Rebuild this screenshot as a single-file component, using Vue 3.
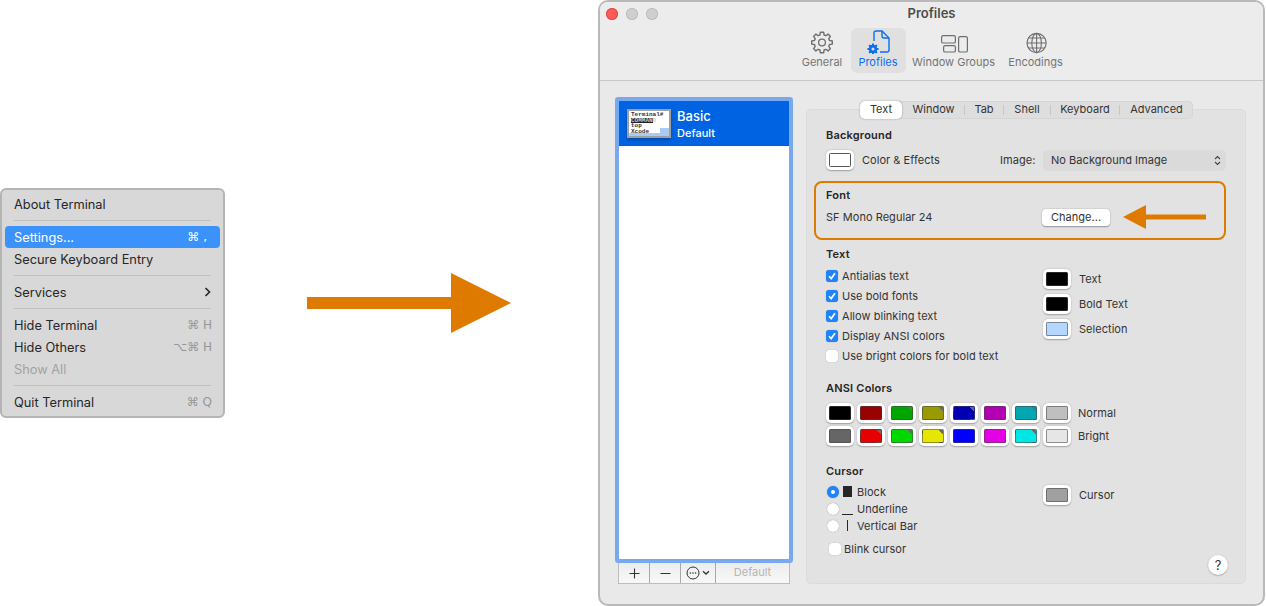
<template>
  <div class="page">
    <div class="menu">
      <template v-for="item in menuItems" :key="item.label">
        <div v-if="item.sep" class="menu-sep"></div>
        <div v-else class="menu-row" :class="{ active: item.active, muted: item.muted }">
          <span>{{ item.label }}</span>
          <span v-if="item.keys" class="keys">{{ item.keys }}</span>
          <svg v-if="item.sub" class="sub-arrow" width="7" height="10" viewBox="0 0 7 10">
            <path d="M1.5 1 L5.5 5 L1.5 9" fill="none" stroke="#2b2b2b" stroke-width="1.7" />
          </svg>
        </div>
      </template>
    </div>

    <svg class="big-arrow" width="204" height="60" viewBox="0 0 204 60">
      <path d="M0 24 H144 V0 L204 30 L144 60 V36 H0 Z" fill="#df7a00" />
    </svg>

    <div class="window">
      <div class="lights">
        <span class="light red"></span>
        <span class="light"></span>
        <span class="light"></span>
      </div>
      <div class="title">Profiles</div>
      <div class="toolbar">
        <div class="tool general">
          <svg width="24" height="24" viewBox="0 0 24 24">
            <path :d="gearOutline" fill="none" stroke="#6e6e6e" stroke-width="1.4" stroke-linejoin="round" />
            <circle cx="12" cy="12.5" r="3.4" fill="none" stroke="#6e6e6e" stroke-width="1.3" />
          </svg>
          <span>General</span>
        </div>
        <div class="tool profiles">
          <svg width="24" height="24" viewBox="0 0 24 24">
            <path d="M8 11 V3 a2 2 0 0 1 2-2 H16 L23 8 V20 a2 2 0 0 1-2 2 H14" fill="none" stroke="#0a6ef0" stroke-width="1.4" />
            <path d="M16 1 V6 a2 2 0 0 0 2 2 H23" fill="none" stroke="#0a6ef0" stroke-width="1.4" />
            <path :d="smallGear" fill="#0a6ef0" />
            <circle cx="7" cy="19" r="1.5" fill="#e0e0e0" />
          </svg>
          <span>Profiles</span>
        </div>
        <div class="tool groups">
          <svg width="30" height="24" viewBox="0 0 30 24">
            <rect x="2.6" y="5.6" width="13.8" height="7.4" rx="1.6" fill="none" stroke="#6e6e6e" stroke-width="1.2" />
            <rect x="4.6" y="15.6" width="11.8" height="6.4" rx="1.6" fill="none" stroke="#6e6e6e" stroke-width="1.2" />
            <rect x="19.6" y="6.6" width="8.8" height="15.4" rx="1.6" fill="none" stroke="#6e6e6e" stroke-width="1.2" />
          </svg>
          <span>Window Groups</span>
        </div>
        <div class="tool encodings">
          <svg width="24" height="24" viewBox="0 0 24 24">
            <g fill="none" stroke="#6e6e6e" stroke-width="1.1">
              <circle cx="12.6" cy="13" r="9.6" />
              <ellipse cx="12.6" cy="13" rx="4.8" ry="9.6" />
              <path d="M12.6 3.4 V22.6 M3 13 H22.2 M4.4 8 H20.8 M4.4 18 H20.8" />
            </g>
          </svg>
          <span>Encodings</span>
        </div>
      </div>

      <div class="content">
        <div class="sidebar">
          <div class="profile-list">
            <div class="profile-row">
              <div class="thumb">
                <div class="thumb-line">Terminal#</div>
                <div class="thumb-line inv">COMMAND</div>
                <div class="thumb-line">top</div>
                <div class="thumb-line">Xcode</div>
                <div class="thumb-sel"></div>
              </div>
              <div class="profile-names">
                <div class="profile-name">Basic</div>
                <div class="profile-default">Default</div>
              </div>
            </div>
          </div>
          <div class="list-buttons">
            <div class="lb plus">
              <svg width="11" height="11" viewBox="0 0 11 11"><path d="M5.5 0.5 V10.5 M0.5 5.5 H10.5" stroke="#333" stroke-width="1.1" /></svg>
            </div>
            <div class="lb minus">
              <svg width="11" height="11" viewBox="0 0 11 11"><path d="M0.5 5.5 H10.5" stroke="#333" stroke-width="1.1" /></svg>
            </div>
            <div class="lb action">
              <svg width="24" height="14" viewBox="0 0 24 14">
                <circle cx="7" cy="7" r="6" fill="none" stroke="#333" stroke-width="1" />
                <circle cx="4.4" cy="7" r="0.8" fill="#333" />
                <circle cx="7" cy="7" r="0.8" fill="#333" />
                <circle cx="9.6" cy="7" r="0.8" fill="#333" />
                <path d="M17 5.2 L20 8 L23 5.2" fill="none" stroke="#333" stroke-width="1.3" />
              </svg>
            </div>
            <div class="lb default-btn">Default</div>
          </div>
        </div>

        <div class="pane">
          <div class="tabs">
            <div v-for="(tab, i) in tabs" :key="tab.name" class="tab" :class="{ on: i === 0, split: i > 1 }" :style="{ width: tab.width + 'px' }">{{ tab.name }}</div>
          </div>
          <div class="panel">
            <h4>Background</h4>
            <div class="bg-row">
              <span class="swatch"><i class="plain"></i></span>
              <span class="bg-label">Color &amp; Effects</span>
              <span class="image-label">Image:</span>
              <div class="select">
                <span>No Background Image</span>
                <svg width="7" height="11" viewBox="0 0 7 11">
                  <path d="M1 4 L3.5 1.5 L6 4 M1 7 L3.5 9.5 L6 7" fill="none" stroke="#444" stroke-width="1.1" />
                </svg>
              </div>
            </div>

            <div class="font-box">
              <h4>Font</h4>
              <div class="font-row">
                <span class="font-name">SF Mono Regular 24</span>
                <div class="change">Change...</div>
              </div>
              <svg class="small-arrow" width="83" height="24" viewBox="0 0 83 24">
                <path d="M0 12 L23 0 V9.5 H83 V14.5 H23 V24 Z" fill="#df7a00" />
              </svg>
            </div>

            <h4 class="text-head">Text</h4>
            <div class="columns">
              <div class="col-left">
                <label v-for="opt in textOptions" :key="opt.label" class="check-row">
                  <span class="check" :class="{ on: opt.on }">
                    <svg v-if="opt.on" width="10" height="10" viewBox="0 0 10 10">
                      <path d="M2 5.2 L4.2 7.6 L8 2.2" fill="none" stroke="#fff" stroke-width="1.7" />
                    </svg>
                  </span>
                  {{ opt.label }}
                </label>
              </div>
              <div class="col-right">
                <div v-for="c in textColors" :key="c.label" class="color-row">
                  <span class="swatch"><i :style="{ background: c.color }"></i></span>
                  <span>{{ c.label }}</span>
                </div>
              </div>
            </div>

            <h4 class="ansi-head">ANSI Colors</h4>
            <div v-for="row in ansiRows" :key="row.label" class="ansi-row">
              <span v-for="(c, i) in row.colors" :key="i" class="swatch">
                <i :style="{ background: c }"></i>
              </span>
              <span class="ansi-label">{{ row.label }}</span>
            </div>

            <h4 class="cursor-head">Cursor</h4>
            <div class="columns">
              <div class="col-left">
                <div v-for="(r, i) in cursorKinds" :key="r.label" class="radio-row">
                  <span class="radio" :class="{ on: i === 0 }"></span>
                  <span class="glyph"><i :class="r.cls"></i></span>
                  <span>{{ r.label }}</span>
                </div>
                <label class="check-row blink">
                  <span class="check"></span>
                  Blink cursor
                </label>
              </div>
              <div class="col-right cursor-col">
                <div class="color-row">
                  <span class="swatch"><i style="background: #a0a0a0"></i></span>
                  <span>Cursor</span>
                </div>
              </div>
            </div>
            <div class="help">?</div>
          </div>
        </div>
      </div>
    </div>
  </div>
</template>

<script setup>
const menuItems = [
  { label: 'About Terminal' },
  { label: 's1', sep: true },
  { label: 'Settings...', keys: '⌘ ,', active: true },
  { label: 'Secure Keyboard Entry' },
  { label: 's2', sep: true },
  { label: 'Services', sub: true },
  { label: 's3', sep: true },
  { label: 'Hide Terminal', keys: '⌘ H' },
  { label: 'Hide Others', keys: '⌥⌘ H' },
  { label: 'Show All', muted: true },
  { label: 's4', sep: true },
  { label: 'Quit Terminal', keys: '⌘ Q' }
]

const tabs = [
  { name: 'Text', width: 42 },
  { name: 'Window', width: 62 },
  { name: 'Tab', width: 39 },
  { name: 'Shell', width: 47 },
  { name: 'Keyboard', width: 69 },
  { name: 'Advanced', width: 74 }
]

const textOptions = [
  { label: 'Antialias text', on: true },
  { label: 'Use bold fonts', on: true },
  { label: 'Allow blinking text', on: true },
  { label: 'Display ANSI colors', on: true },
  { label: 'Use bright colors for bold text', on: false }
]

const textColors = [
  { label: 'Text', color: '#000' },
  { label: 'Bold Text', color: '#000' },
  { label: 'Selection', color: '#b3d7ff' }
]

// the dark corner is the hint macOS draws on some wells
const corner = (c) => `linear-gradient(225deg, #6a6a6a 0 3px, ${c} 3px)`

const ansiRows = [
  {
    label: 'Normal',
    colors: ['#000000', '#990000', corner('#00a600'), corner('#999900'), corner('#0000b2'), '#b200b2', corner('#00a6b2'), '#bfbfbf']
  },
  {
    label: 'Bright',
    colors: ['#666666', corner('#e60000'), corner('#00d900'), corner('#e6e600'), '#0000ff', '#e600e6', corner('#00e6e6'), '#e6e6e6']
  }
]

const cursorKinds = [
  { label: 'Block', cls: 'block' },
  { label: 'Underline', cls: 'under' },
  { label: 'Vertical Bar', cls: 'bar' }
]

// gear outline, teeth are just alternating radii
function gear(cx, cy, outer, inner, teeth) {
  const pts = []
  const step = (Math.PI * 2) / teeth
  for (let i = 0; i < teeth; i++) {
    const a = i * step - Math.PI / 2
    const w = step * 0.2
    const list = [
      [a - w, outer],
      [a + w, outer],
      [a + step / 2 - w * 0.8, inner],
      [a + step / 2 + w * 0.8, inner]
    ]
    for (const [t, r] of list) {
      pts.push(`${(cx + Math.cos(t) * r).toFixed(2)} ${(cy + Math.sin(t) * r).toFixed(2)}`)
    }
  }
  return 'M' + pts.join(' L') + ' Z'
}

const gearOutline = gear(12, 12.5, 10.4, 7.8, 8)
const smallGear = gear(7, 19, 5.6, 4.2, 8)
</script>

<style scoped>
.page {
  width: 1266px;
  height: 606px;
  display: flex;
  align-items: center;
  font-family: Inter, "Liberation Sans", "DejaVu Sans", sans-serif;
  color: #2e2e2e;
  background: #fff;
  overflow: hidden;
}

/* left menu */
.menu {
  width: 225px;
  height: 230px;
  box-sizing: border-box;
  flex: none;
  padding: 3px 3px;
  background: #d8d8d8;
  border: 2px solid #b4b4b4;
  border-radius: 6px;
  font-size: 12.8px;
  color: #262626;
}
.menu-row {
  height: 22px;
  display: flex;
  align-items: center;
  justify-content: space-between;
  padding: 0 8px 0 9px;
  border-radius: 4px;
}
.menu-row.active {
  background: #3b92fb;
  color: #fff;
}
.menu-row.muted {
  color: #a2a2a2;
}
.keys {
  color: #979797;
  font-size: 12px;
  font-family: "DejaVu Sans", Inter, sans-serif;
}
.active .keys {
  color: #fff;
  margin-right: 5px;
}
.sub-arrow {
  margin-right: 1px;
}
.menu-sep {
  height: 1px;
  margin: 5px 9px;
  background: #bfbfbf;
}

.big-arrow {
  flex: none;
  margin-left: 82px;
}

/* window */
.window {
  position: relative;
  flex: none;
  margin-left: 87px;
  width: 667px;
  height: 606px;
  box-sizing: border-box;
  border: 2px solid #b9b9b9;
  border-radius: 10px;
  background: #e9e9e9;
  overflow: hidden;
}
.lights {
  position: absolute;
  left: 6px;
  top: 6px;
  display: flex;
  gap: 8px;
}
.light {
  width: 12px;
  height: 12px;
  border-radius: 50%;
  background: #cfcfcf;
  box-shadow: inset 0 0 0 1px #bdbdbd;
}
.light.red {
  background: #fc5b57;
  box-shadow: inset 0 0 0 1px #e04a45;
}
.title {
  padding-top: 3px;
  height: 16px;
  line-height: 16px;
  text-align: center;
  font-size: 13px;
  font-weight: 600;
  color: #4c4c4c;
  background: #ececec;
}
.toolbar {
  display: flex;
  justify-content: center;
  padding: 7px 0;
  background: #ececec;
  border-bottom: 1px solid #c8c8c8;
}
.tool {
  height: 45px;
  box-sizing: border-box;
  padding-top: 2px;
  display: flex;
  flex-direction: column;
  align-items: center;
  font-size: 11px;
  line-height: 14px;
  color: #757575;
}
.tool svg {
  display: block;
  margin-bottom: 1px;
}
.tool.general { width: 57px; }
.tool.profiles {
  width: 55px;
  background: #e0e0e0;
  border-radius: 6px;
  color: #0a6ef0;
}
.tool.groups { width: 96px; }
.tool.encodings { width: 68px; }

.content {
  display: flex;
  gap: 13px;
  padding: 16px 0 0 15px;
}

/* profile list */
.sidebar {
  width: 178px;
  flex: none;
}
.profile-list {
  height: 466px;
  box-sizing: border-box;
  border: 4px solid #78a9f0;
  border-radius: 3px;
  background: #fff;
}
.profile-row {
  height: 45px;
  display: flex;
  gap: 6px;
  padding: 8px 0 0 8px;
  box-sizing: border-box;
  background: #0063e1;
  color: #fff;
}
.thumb {
  position: relative;
  width: 44px;
  height: 29px;
  box-sizing: border-box;
  border: 2px solid #a0a0a0;
  background: #fff;
  overflow: hidden;
  padding: 1px 0 0 2px;
  box-shadow: 0 2px 3px rgba(0, 0, 0, 0.25);
}
.thumb-line {
  font-family: "Liberation Mono", monospace;
  font-size: 6px;
  font-weight: 700;
  line-height: 5.6px;
  color: #333;
  white-space: nowrap;
  position: relative;
  z-index: 1;
}
.thumb-line.inv {
  width: 22px;
  background: #222;
  color: #ccc;
}
.thumb-sel {
  position: absolute;
  right: 0;
  bottom: 0;
  width: 40px;
  height: 8px;
  background: linear-gradient(#0000 0 5px, #a9ccf4 5px), linear-gradient(90deg, #fff 0 31px, #a9ccf4 31px);
}
.profile-names {
  margin-top: -1px;
}
.profile-name {
  font-size: 13px;
  font-weight: 500;
  line-height: 16px;
}
.profile-default {
  margin-top: 2px;
  font-size: 11px;
  font-weight: 500;
  line-height: 14px;
}
.list-buttons {
  display: flex;
  height: 21px;
  margin: 0 3px;
  box-sizing: border-box;
  border: 1px solid #bdbdbd;
  border-top: none;
  background: linear-gradient(#ededed, #f8f8f8);
}
.lb {
  display: flex;
  align-items: center;
  justify-content: center;
  box-sizing: border-box;
  border-right: 1px solid #a8a8a8;
}
.lb.plus { width: 31px; }
.lb.minus { width: 31px; }
.lb.action { width: 35px; }
.lb.default-btn {
  flex: 1;
  border-right: none;
  padding-bottom: 2px;
  font-size: 11px;
  color: #b4b4b4;
}

/* right pane */
.pane {
  width: 440px;
  flex: none;
  padding-top: 4px;
}
.tabs {
  position: relative;
  z-index: 1;
  display: flex;
  width: 333px;
  height: 18px;
  margin-left: 54px;
  background: #dedede;
  border-radius: 5px;
  box-shadow: inset 0 0 0 1px #d5d5d5;
  font-size: 11px;
  color: #333;
}
.tab {
  position: relative;
  text-align: center;
  line-height: 16px;
  flex: none;
  box-sizing: border-box;
}
.tab:not(.on) {
  padding-left: 1px;
}
.tab.on {
  background: #fff;
  border-radius: 5px;
  box-shadow: 0 0 2px rgba(0, 0, 0, 0.35);
}
.tab.split::before {
  content: "";
  position: absolute;
  left: 0;
  top: 4px;
  width: 1px;
  height: 10px;
  background: #c6c6c6;
}
.panel {
  position: relative;
  height: 475px;
  margin-top: -10px;
  box-sizing: border-box;
  padding: 18px 19px 0;
  background: #e2e2e2;
  border: 1px solid #dbdbdb;
  border-radius: 5px;
  font-size: 11px;
  letter-spacing: 0.04px;
  line-height: 14px;
  color: #333;
}
h4 {
  margin: 0;
  height: 14px;
  font-size: 11px;
  letter-spacing: 0.2px;
  line-height: 14px;
  font-weight: 600;
  color: #262626;
}
.swatch {
  flex: none;
  display: flex;
  align-items: center;
  justify-content: center;
  width: 28px;
  height: 20px;
  background: #fff;
  border-radius: 5px;
  box-shadow: 0 0.5px 1.5px rgba(0, 0, 0, 0.3);
}
.swatch i {
  display: block;
  width: 22px;
  height: 14px;
  box-sizing: border-box;
  border: 1px solid rgba(70, 70, 70, 0.55);
  border-radius: 1.5px;
}
.swatch i.plain {
  background: #fff;
  border-color: #555;
}
.bg-row {
  display: flex;
  align-items: center;
  height: 20px;
  margin-top: 8px;
}
.bg-label {
  margin-left: 8px;
  width: 138px;
}
.image-label {
  width: 43px;
}
.select {
  width: 183px;
  height: 21px;
  box-sizing: border-box;
  padding: 0 5px 0 8px;
  display: flex;
  align-items: center;
  justify-content: space-between;
  background: #dadada;
  border-radius: 5px;
}

.font-box {
  position: relative;
  height: 59px;
  margin: 11px 0 0 -12px;
  box-sizing: border-box;
  padding: 5px 114px 0 10px;
  border: 2px solid #df7a00;
  border-radius: 8px;
}
.font-row {
  display: flex;
  align-items: center;
  justify-content: space-between;
  height: 17px;
  margin-top: 7px;
}
.font-name {
  padding-bottom: 2px;
}
.change {
  width: 68px;
  height: 17px;
  line-height: 16px;
  text-align: center;
  background: #fff;
  border-radius: 4px;
  box-shadow: 0 0.5px 1.5px rgba(0, 0, 0, 0.35);
}
.small-arrow {
  position: absolute;
  left: 307px;
  top: 22px;
}

.text-head {
  margin-top: 7px;
}
.columns {
  display: flex;
}
.col-left {
  width: 217px;
  flex: none;
}
.check-row {
  display: flex;
  align-items: center;
  gap: 4px;
  height: 20px;
}
.check {
  flex: none;
  display: flex;
  align-items: center;
  justify-content: center;
  width: 12px;
  height: 12px;
  box-sizing: border-box;
  background: #fff;
  border-radius: 3px;
  box-shadow: 0 0 1px rgba(0, 0, 0, 0.4);
}
.check.on {
  background: #1f84fb;
}
.text-head + .columns {
  margin-top: 5px;
}
.text-head + .columns .col-right {
  padding-top: 3px;
}
.color-row {
  display: flex;
  align-items: center;
  gap: 8px;
  height: 20px;
  margin-bottom: 5px;
}

.ansi-head {
  margin-top: 15px;
  margin-bottom: 8px;
}
.ansi-row {
  display: flex;
  align-items: center;
  gap: 3px;
  margin-bottom: 3px;
}
.ansi-label {
  margin-left: 4px;
}
.cursor-head {
  margin-top: 18px;
}
.cursor-head + .columns {
  margin-top: 5px;
}
.radio-row {
  display: flex;
  align-items: center;
  height: 17px;
  padding-left: 1px;
}
.radio {
  flex: none;
  width: 12px;
  height: 12px;
  box-sizing: border-box;
  background: #fff;
  border-radius: 50%;
  box-shadow: 0 0 1px rgba(0, 0, 0, 0.45);
}
.radio.on {
  background: #fff;
  border: 4px solid #1f84fb;
}
.glyph {
  flex: none;
  width: 13px;
  margin: 0 2px 0 3px;
  height: 13px;
  position: relative;
}
.glyph i {
  position: absolute;
  background: #262626;
}
.glyph .block {
  left: 1px;
  top: 1px;
  width: 9px;
  height: 11px;
}
.glyph .under {
  left: 0;
  bottom: 0;
  width: 11px;
  height: 1px;
}
.glyph .bar {
  left: 5px;
  top: 1px;
  width: 1px;
  height: 11px;
}
.check-row.blink {
  height: 16px;
  margin-top: 7px;
  padding-left: 3px;
  gap: 3px;
}
.cursor-col {
  padding-top: 2px;
}
.help {
  position: absolute;
  right: 17px;
  bottom: 8px;
  width: 20px;
  height: 20px;
  line-height: 20px;
  text-align: center;
  background: #fff;
  border-radius: 50%;
  font-size: 13px;
  color: #333;
  box-shadow: 0 0.5px 1.5px rgba(0, 0, 0, 0.35);
}
</style>
